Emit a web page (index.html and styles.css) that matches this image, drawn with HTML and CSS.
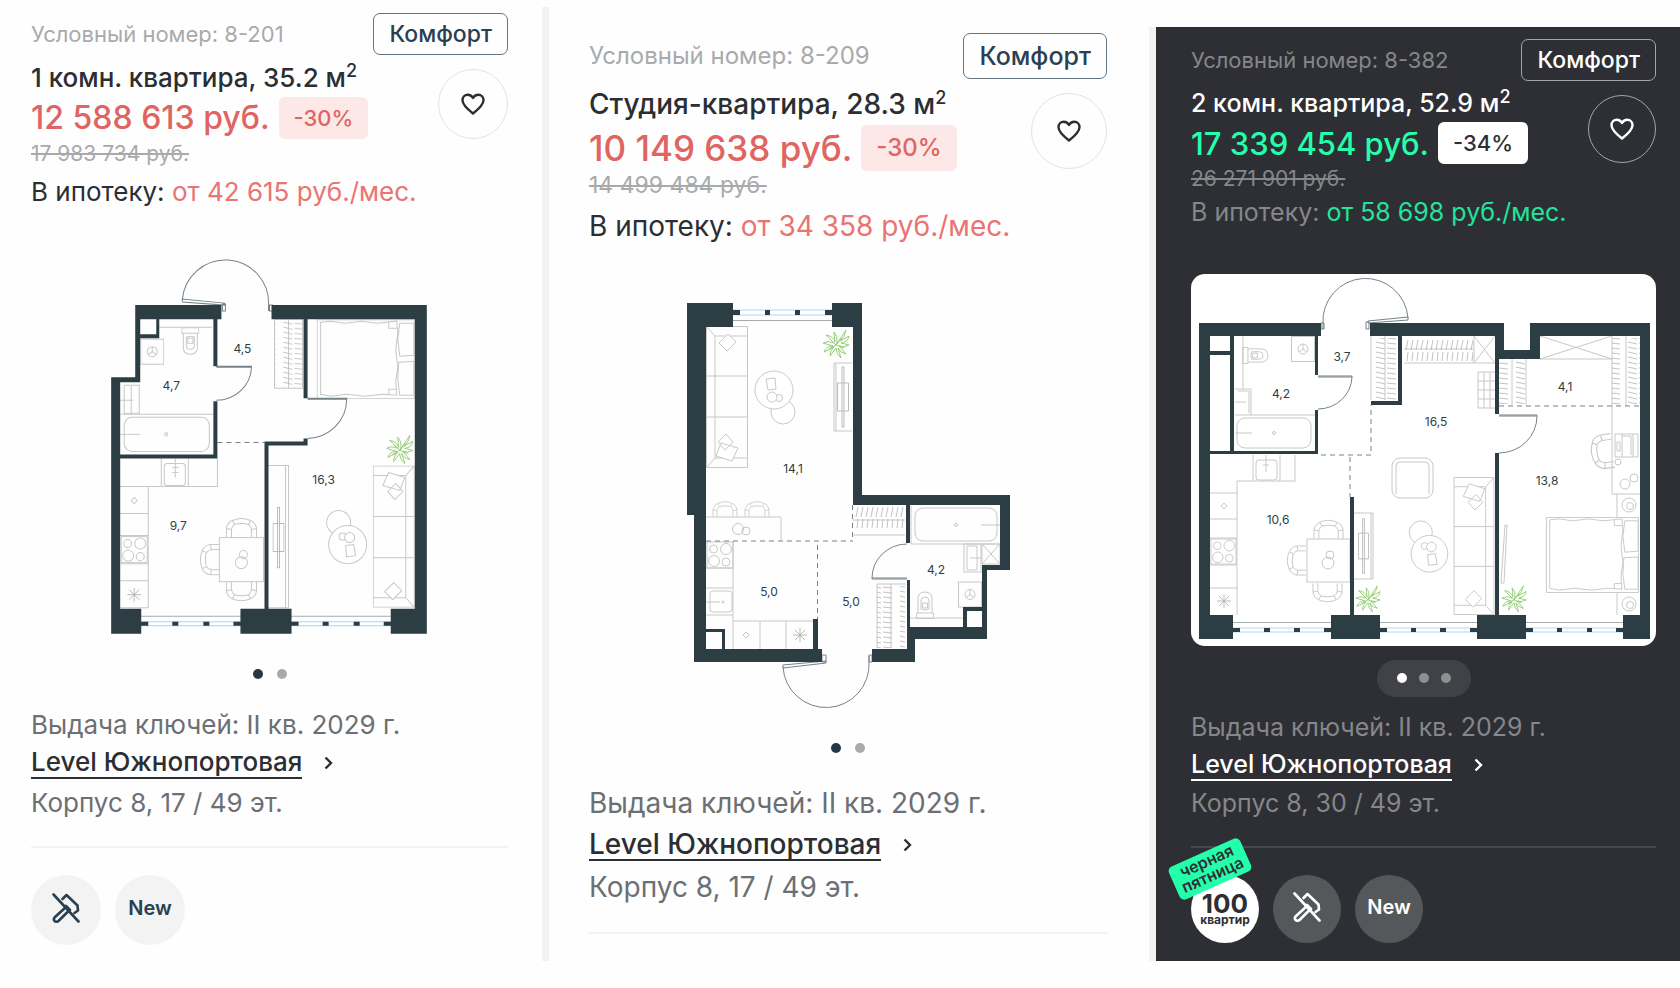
FILE: index.html
```html
<!DOCTYPE html>
<html lang="ru">
<head>
  <meta charset="UTF-8" />
  <meta name="viewport" content="width=device-width, initial-scale=1.0" />
  <title>Квартиры — Level Южнопортовая</title>
  <link rel="stylesheet" href="styles.css">
</head>
<body>
  <!-- shared icons and furniture -->
  <svg class="sprite" aria-hidden="true">
    <defs>
      <pattern id="hangV" width="28" height="5" patternUnits="userSpaceOnUse">
        <path d="M4 1l9 2M15 2l9 1" stroke="#b4b4b4" stroke-width="0.8" />
      </pattern>
      <pattern id="hangH" width="5" height="28" patternUnits="userSpaceOnUse">
        <path d="M3 3l-2 10M3 15l-1 9" stroke="#b4b4b4" stroke-width="0.8" />
      </pattern>
      <symbol id="heart" viewBox="0 0 24 22">
        <path d="M12 20.5C7 16.5 1.5 12 1.5 7.200C1.500 4 3.800 1.700 6.700 1.700C9 1.700 11 3 12 5C13 3 15 1.700 17.300 1.700C20.200 1.700 22.500 4 22.500 7.200C22.500 12 17 16.500 12 20.500Z" fill="none" stroke="currentColor" stroke-width="2.400" stroke-linejoin="round" />
      </symbol>
      <symbol id="hammer" viewBox="0 0 28 30">
        <path d="M1.500 1.500L26.500 28.500M10.500 6L14.500 2L25.500 12.500L26 17.500L22.500 20M14 13L18 17M14 14L2.500 24.500Q1 27 3 28.300Q5 29.500 7 27.500L16.500 18" fill="none" stroke="currentColor" stroke-width="2.600" stroke-linecap="round" stroke-linejoin="round" />
      </symbol>
      <symbol id="chevron" viewBox="0 0 9 14">
        <path d="M1.500 1.500L7 7L1.500 12.500" fill="none" stroke="currentColor" stroke-width="2.400" />
      </symbol>
      <symbol id="plant" viewBox="0 0 28 30">
        <path d="M14 16L24 1Q23 8 18 12L27 7Q26 13 19 14L27 16Q22 19 17 17L24 25Q18 24 16 19L19 29Q14 25 14 19L8 27Q8 21 12 18L2 23Q4 17 11 17L1 14Q6 11 12 14L4 6Q11 7 13 13L12 3Q16 7 15 13ZM14 16L20 9M14 16L22 19M14 16L7 20M14 16L8 10" fill="none" stroke="#8cc96b" stroke-width="0.9" />
      </symbol>
      <symbol id="chair" viewBox="0 0 32 20">
        <path d="M1 20V10Q3 4 7 3Q16 -1 25 3Q29 4 31 10V20M6 20V12Q7 8 9 7Q16 5 23 7Q25 8 26 12V20M7 3L9 7M25 3L23 7M1 11L6 12M31 11L26 12" fill="none" stroke="#c8c8c8" />
      </symbol>
      <symbol id="stove" viewBox="0 0 28 28">
        <g fill="none" stroke="#c8c8c8">
          <rect x="1" y="1" width="26" height="26" /><circle cx="7.500" cy="8" r="4" /><circle cx="20" cy="8" r="5.500" /><circle cx="8" cy="20" r="5.500" /><circle cx="20" cy="21" r="4" />
        </g>
      </symbol>
      <symbol id="sofa" viewBox="0 0 42 142">
        <g fill="none" stroke="#c8c8c8">
          <path d="M0.500 0.500H41.500V141.500H0.500ZM33 10V132M0.500 10H33L41.500 0.500M0.500 51H41.500M0.500 92H41.500M0.500 132H33L41.500 141.500" />
          <path d="M16 7L32 12L27 25L10 20ZM15 26L23 18L30 26L22 34ZM12 126L21 117L29 125L20 134Z" fill="#fff" />
        </g>
      </symbol>
      <symbol id="tables" viewBox="0 0 42 56">
        <g fill="#fff" stroke="#c8c8c8">
          <circle cx="13" cy="13" r="12" /><circle cx="22" cy="35" r="19" /><circle cx="17" cy="27" r="3.500" /><circle cx="24" cy="28" r="5" /><path d="M20 36l8-1 2 11-9 1z" />
        </g>
      </symbol>
      <symbol id="toilet" viewBox="0 0 18 28">
        <path d="M0.500 0.500H17.500V6H0.500ZM2 6V20Q2 27 9 27Q16 27 16 20V6M5 10Q9 8 13 10V18Q13 22 9 22Q5 22 5 18ZM6.500 11H11.500V16H6.500Z" fill="none" stroke="#c8c8c8" />
      </symbol>
      <symbol id="washer" viewBox="0 0 24 26">
        <g fill="none" stroke="#c8c8c8"><rect x="0.500" y="0.500" width="23" height="25" /><circle cx="12" cy="13" r="5" /><path d="M12 8V13L8 16M12 13L16 16" /></g>
      </symbol>
      <symbol id="star" viewBox="0 0 14 14">
        <path d="M7 0V14M0 7H14M2 2L12 12M12 2L2 12" stroke="#aaa" stroke-width="0.8" />
      </symbol>
      <symbol id="tv" viewBox="0 0 12 62">
        <path d="M5 1H7V61H5ZM0.500 17H11.500V45H0.500Z" fill="none" stroke="#bbb" />
      </symbol>
      <symbol id="bed" viewBox="0 0 98 80">
        <path d="M0.500 0.500H97.500V79.500H0.500ZM4 3L14 2L28 4L45 2L60 4L80 2L81 14L79 30L81 48L79 62L80 76L66 75L48 77L30 75L14 77L4 75ZM72 3V9H80M72 76V70H80M83 4H97V36L83 37L81 20ZM82 43L97 42V76L83 76L81 60Z" fill="none" stroke="#c8c8c8" />
      </symbol>
    </defs>
  </svg>

  <main class="listing">
    <article class="card card-one">
      <div class="card-top">
        <div class="summary">
          <p class="number">Условный номер: 8-201</p>
          <h2>1 комн. квартира, 35.2 м<sup>2</sup></h2>
          <div class="price-row"><strong class="price">12 588 613 руб.</strong><span class="discount">-30%</span></div>
          <p class="old-price"><s>17 983 734 руб.</s></p>
        </div>
        <div class="side">
          <span class="tag">Комфорт</span>
          <button type="button" class="like" aria-label="В избранное"><svg><use href="#heart" /></svg></button>
        </div>
      </div>
      <p class="mortgage">В ипотеку: <span>от 42 615 руб./мес.</span></p>

      <svg class="plan" viewBox="32 250 476 394" role="img" aria-label="Планировка 1 комн. квартиры">
        <g class="thin">
          <path d="M160 326H213M121 413H214M289 318V387M275 318H303V387H275Z" />
          <rect x="125" y="384" width="15" height="28" /><path d="M132 384V412M121 399H134" />
          <rect x="125" y="416" width="85" height="34" rx="8" /><path d="M121 433H141" /><circle cx="167" cy="433" r="1.500" />
          <path d="M121 485H218V457M162 457V485M189 457V485M149 485V606H121M121 512H149M121 534H149M121 562H149M121 579H149" />
          <rect x="165" y="462" width="21" height="22" rx="3" /><path d="M176 457V476M173 466H179M173 471H179M132 499L135 496L138 499L135 502Z" />
          <rect x="220" y="536" width="44" height="44" /><circle cx="242" cy="561" r="6" /><circle cx="244" cy="553" r="4" />
          <path d="M268 464H289V606H268M286 464V606" />
        </g>
        <rect x="275" y="320" width="28" height="66" fill="url(#hangV)" />
        <use href="#toilet" x="182" y="326" width="18" height="28" />
        <use href="#washer" x="141" y="337" width="24" height="27" />
        <use href="#bed" x="317" y="318" width="98" height="80" />
        <use href="#plant" x="386" y="433" width="28" height="30" />
        <use href="#stove" x="121" y="534" width="28" height="28" />
        <use href="#star" x="128" y="586" width="14" height="14" />
        <use href="#chair" x="226" y="516" width="32" height="20" />
        <use href="#chair" x="226" y="516" width="32" height="20" transform="rotate(180 242 558)" />
        <use href="#chair" x="226" y="516" width="32" height="20" transform="rotate(-90 242 558)" />
        <use href="#sofa" x="373" y="464" width="42" height="142" />
        <use href="#tv" x="273" y="505" width="12" height="62" />
        <use href="#tables" x="326" y="508" width="42" height="56" />
        <g class="door">
          <path d="M183 299A43 43 0 0 1 269 305V310M183 298V301L225 304V302ZM223 303H226V310H223ZM270 304H273V310H270Z" />
          <path d="M217 365H252V366H217M252 366A35 34 0 0 1 217 399M308 397H347V398H308M347 398A40 39 0 0 1 308 437" />
          <path class="dash" d="M218 441H265" />
        </g>
        <path class="glass" d="M142 620H241V624H142ZM292 620H391V624H292Z" />
        <path class="sill" d="M141 614.500H242M291 614.500H392" />
        <path class="wall" d="M136 304H222V318H141V381H121V607H142V632H112V376H136ZM272 304H427V632H391V607H415V318H272ZM241 607H292V632H241ZM157 318H160V337H141V333H157ZM214 318H218V365H214ZM214 400H218V457H121V453H214ZM304 318H308V397H304ZM304 437H308V444H269V607H265V440H304ZM141 620H149V624H141ZM173 620H179V624H173ZM204 620H210V624H204ZM234 620H242V624H234ZM291 620H299V624H291ZM323 620H329V624H323ZM354 620H360V624H354ZM384 620H392V624H384Z" />
        <g class="area">
          <text x="243" y="352">4,5</text><text x="172" y="389">4,7</text><text x="179" y="528">9,7</text><text x="324" y="483">16,3</text>
        </g>
      </svg>

      <div class="dots">
        <button type="button" class="active" aria-label="Слайд 1"></button>
        <button type="button" aria-label="Слайд 2"></button>
      </div>

      <div class="details">
        <p>Выдача ключей: II кв. 2029 г.</p>
        <p><a href="#project"><span>Level Южнопортовая</span><svg><use href="#chevron" /></svg></a></p>
        <p>Корпус 8, 17 / 49 эт.</p>
      </div>
      <div class="features">
        <span class="feature"><svg><use href="#hammer" /></svg></span>
        <span class="feature">New</span>
      </div>
    </article>

    <article class="card card-two">
      <div class="card-top">
        <div class="summary">
          <p class="number">Условный номер: 8-209</p>
          <h2>Студия-квартира, 28.3 м<sup>2</sup></h2>
          <div class="price-row"><strong class="price">10 149 638 руб.</strong><span class="discount">-30%</span></div>
          <p class="old-price"><s>14 499 484 руб.</s></p>
        </div>
        <div class="side">
          <span class="tag">Комфорт</span>
          <button type="button" class="like" aria-label="В избранное"><svg><use href="#heart" /></svg></button>
        </div>
      </div>
      <p class="mortgage">В ипотеку: <span>от 34 358 руб./мес.</span></p>

      <svg class="plan" viewBox="589 290 518 424" role="img" aria-label="Планировка студии">
        <g class="thin">
          <path d="M834 363H852M834 363V431H852M836 363V431" />
          <path d="M706 517H781V540" /><circle cx="738" cy="529" r="5.500" /><circle cx="746" cy="531" r="4" />
          <path d="M733 541V649M706 568H733M706 588H733M706 615H733M733 621H813M760 621V649M786 621V649M743 635L746 632L749 635L746 638Z" />
          <rect x="710" y="591" width="22" height="21" rx="3" /><path d="M706 602H720" /><circle cx="723" cy="602" r="1" />
          <path d="M853 535H905M853 520H905M877 648V584H906M891 584V648" />
          <rect x="915" y="508" width="82" height="33" rx="8" /><path d="M911 506V544H1000M981 525H1000" /><circle cx="956" cy="525" r="1.500" />
          <rect x="964" y="544" width="17" height="28" /><path d="M967 546H977V570H967ZM970 558H981M982 544H1000V564H982ZM982 544L1000 564M1000 544L982 564M909 618H963" />
        </g>
        <rect x="853" y="506" width="52" height="28" fill="url(#hangH)" />
        <rect x="877" y="586" width="28" height="62" fill="url(#hangV)" />
        <use href="#sofa" x="706" y="326" width="42" height="142" transform="rotate(180 727 397)" />
        <use href="#tables" x="754" y="369" width="42" height="56" transform="rotate(180 775 397)" />
        <use href="#tv" x="837" y="366" width="12" height="62" />
        <use href="#plant" x="822" y="329" width="28" height="30" />
        <use href="#chair" x="712" y="501" width="26" height="16" />
        <use href="#chair" x="744" y="501" width="26" height="16" />
        <use href="#stove" x="706" y="541" width="28" height="28" />
        <use href="#star" x="793" y="628" width="14" height="14" />
        <use href="#washer" x="958" y="581" width="24" height="27" />
        <use href="#toilet" x="916" y="591" width="18" height="28" transform="rotate(180 925 605)" />
        <g class="door">
          <path d="M783 667A43 43 0 0 0 869 662V656M783 668V665L826 661V663ZM822 655H826V662H822ZM869 655H872V662H869Z" />
          <path d="M907 578H872V579H907M872 578A35 34 0 0 1 907 544" />
          <path class="dash" d="M706 541H853M817.500 545V619M852.500 505V537" />
        </g>
        <path class="glass" d="M733 310H832V315H733Z" />
        <path class="sill" d="M733 320.500H832" />
        <path class="wall" d="M687 303H733V327H706V649H822V662H694V515H687ZM832 303H862V495H1010V570H987V639H915V662H872V649H907V580H910V627H982V565H1000V505H910V543H906V505H853V327H832ZM706 629H725V649H722V632H706ZM963 607H982V611H967V627H963ZM813 619H818V649H813ZM733 310H740V315H733ZM765 310H770V315H765ZM795 310H800V315H795ZM825 310H832V315H825Z" />
        <g class="area">
          <text x="793" y="473">14,1</text><text x="769" y="596">5,0</text><text x="851" y="606">5,0</text><text x="936" y="574">4,2</text>
        </g>
      </svg>

      <div class="dots">
        <button type="button" class="active" aria-label="Слайд 1"></button>
        <button type="button" aria-label="Слайд 2"></button>
      </div>

      <div class="details">
        <p>Выдача ключей: II кв. 2029 г.</p>
        <p><a href="#project"><span>Level Южнопортовая</span><svg><use href="#chevron" /></svg></a></p>
        <p>Корпус 8, 17 / 49 эт.</p>
      </div>
    </article>

    <article class="card card-three dark">
      <div class="card-top">
        <div class="summary">
          <p class="number">Условный номер: 8-382</p>
          <h2>2 комн. квартира, 52.9 м<sup>2</sup></h2>
          <div class="price-row"><strong class="price">17 339 454 руб.</strong><span class="discount">-34%</span></div>
          <p class="old-price"><s>26 271 901 руб.</s></p>
        </div>
        <div class="side">
          <span class="tag">Комфорт</span>
          <button type="button" class="like" aria-label="В избранное"><svg><use href="#heart" /></svg></button>
        </div>
      </div>
      <p class="mortgage">В ипотеку: <span>от 58 698 руб./мес.</span></p>

      <svg class="plan" viewBox="1191 273 465 372" role="img" aria-label="Планировка 2 комн. квартиры">
        <g class="thin">
          <path d="M1243 335V388M1235 414H1315M1235 388H1251V414M1238 390H1249V412M1235 401H1246" />
          <rect x="1237" y="417" width="74" height="30" rx="8" /><path d="M1235 432H1252" /><circle cx="1274" cy="432" r="1.500" />
          <path d="M1371 335V399M1385 335V399M1404 362H1474M1404 348H1474M1474 335V362H1495M1474 335L1495 362M1495 335L1474 362" />
          <path d="M1478 371H1495M1478 380H1495M1478 389H1495M1478 398H1495M1478 407H1495M1478 371V407M1484 371V407M1490 371V407" />
          <path d="M1540 358H1612M1540 335L1612 358M1612 335L1540 358M1612 335V493H1640M1626 335V405M1526 358V404M1512 358V404" />
          <path d="M1253 454V480M1280 454V480M1295 454V480H1237V614M1210 492H1237M1210 518H1237M1210 537H1237M1210 564H1237M1210 587H1237M1221 505L1224 502L1227 505L1224 508Z" />
          <rect x="1256" y="459" width="21" height="20" rx="3" /><path d="M1266 454V471M1263 464H1269" />
          <rect x="1307" y="538" width="43" height="43" /><circle cx="1328" cy="562" r="6" /><circle cx="1330" cy="554" r="4" />
          <path d="M1354 512H1373V578H1354M1371 512V578" />
          <rect x="1392" y="457" width="41" height="40" rx="8" /><path d="M1396 493V465Q1396 461 1400 461H1425Q1429 461 1429 465V493" />
          <path d="M1615 433H1638V456H1615ZM1622 433V456M1633 433V456M1622 435H1631V454M1617 441H1620V450H1617Z" /><circle cx="1625" cy="483" r="5" /><circle cx="1634" cy="477" r="4" /><circle cx="1618" cy="461" r="3" />
          <path d="M1617 493V516M1617 592V614" /><circle cx="1629" cy="504" r="7" /><circle cx="1630" cy="505" r="3.500" /><circle cx="1629" cy="603" r="7" /><circle cx="1630" cy="604" r="3.500" />
          <path d="M1505 524H1507L1504 582H1501Z" />
        </g>
        <rect x="1371" y="337" width="28" height="62" fill="url(#hangV)" />
        <rect x="1405" y="335" width="68" height="27" fill="url(#hangH)" />
        <rect x="1612" y="337" width="28" height="68" fill="url(#hangV)" />
        <rect x="1499" y="359" width="28" height="44" fill="url(#hangV)" />
        <use href="#toilet" x="1248" y="341" width="17" height="27" transform="rotate(-90 1256 355)" />
        <use href="#washer" x="1291" y="335" width="24" height="26" />
        <use href="#stove" x="1210" y="537" width="27" height="27" />
        <use href="#star" x="1217" y="593" width="14" height="14" />
        <use href="#chair" x="1313" y="518" width="31" height="20" />
        <use href="#chair" x="1313" y="518" width="31" height="20" transform="rotate(180 1328 560)" />
        <use href="#chair" x="1313" y="518" width="31" height="20" transform="rotate(-90 1328 560)" />
        <use href="#chair" x="1583" y="438" width="36" height="27" transform="rotate(-98 1601 451)" />
        <use href="#tv" x="1358" y="515" width="11" height="60" />
        <use href="#sofa" x="1453" y="476" width="42" height="138" />
        <use href="#tables" x="1408" y="519" width="41" height="54" />
        <use href="#bed" x="1545" y="516" width="95" height="76" />
        <use href="#plant" x="1354" y="584" width="28" height="28" />
        <use href="#plant" x="1500" y="584" width="28" height="28" />
        <g class="door">
          <path d="M1408 317A42 42 0 0 0 1323 323V328M1408 316V319L1368 322V320ZM1321 322H1324V328H1321ZM1366 321H1369V328H1366Z" />
          <path d="M1318 375H1352V376H1318M1352 376A34 33 0 0 1 1318 408M1499 414H1537V415H1499M1537 415A38 37 0 0 1 1499 452" />
          <path class="dash" d="M1321 454H1371V404M1350 456V496M1499 405H1640" />
        </g>
        <path class="glass" d="M1233 627H1331V631H1233ZM1379 627H1477V631H1379ZM1526 627H1624V631H1526Z" />
        <path class="sill" d="M1233 621.500H1331M1379 621.500H1477M1526 621.500H1624" />
        <path class="wall" d="M1199 322H1321V335H1318V374H1315V335H1234V450H1315V409H1318V453H1210V614H1233V638H1199ZM1370 322H1504V349H1530V322H1650V638H1623V614H1640V335H1540V358H1499V413H1495V335H1402V404H1371V400H1398V335H1370ZM1331 614H1350V496H1354V614H1380V638H1331ZM1477 614H1495V452H1499V614H1526V638H1477ZM1233 627H1240V631H1233ZM1264 627H1270V631H1264ZM1294 627H1300V631H1294ZM1324 627H1331V631H1324ZM1379 627H1387V631H1379ZM1411 627H1416V631H1411ZM1440 627H1446V631H1440ZM1470 627H1477V631H1470ZM1526 627H1533V631H1526ZM1557 627H1562V631H1557ZM1587 627H1592V631H1587ZM1616 627H1624V631H1616Z" />
        <path fill="#fff" d="M1210 335H1230V350H1210ZM1210 354H1230V450H1210Z" />
        <g class="area">
          <text x="1342" y="360">3,7</text><text x="1281" y="397">4,2</text><text x="1436" y="425">16,5</text><text x="1565" y="390">4,1</text><text x="1278" y="523">10,6</text><text x="1547" y="484">13,8</text>
        </g>
      </svg>

      <div class="dots">
        <button type="button" class="active" aria-label="Слайд 1"></button>
        <button type="button" aria-label="Слайд 2"></button>
        <button type="button" aria-label="Слайд 3"></button>
      </div>

      <div class="details">
        <p>Выдача ключей: II кв. 2029 г.</p>
        <p><a href="#project"><span>Level Южнопортовая</span><svg><use href="#chevron" /></svg></a></p>
        <p>Корпус 8, 30 / 49 эт.</p>
      </div>
      <div class="features">
        <span class="feature promo"><b>100</b><small>квартир</small><em>черная<br>пятница</em></span>
        <span class="feature"><svg><use href="#hammer" /></svg></span>
        <span class="feature">New</span>
      </div>
    </article>
  </main>
</body>
</html>
```

FILE: styles.css
```css
:root {
  --ink: #2b2e33;
  --navy: #2a4050;
  --muted: #a9aaac;
  --body: #6c6f73;
  --red: #e06462;
  --line: #f2f2f2;
  --wall: #2c3e44;
}

* {
  box-sizing: border-box;
}

body {
  margin: 0;
  background: #fefefe;
  color: var(--ink);
  font-family: Inter, "Noto Sans", sans-serif;
}

p, h2 {
  margin: 0;
  white-space: nowrap;
}

button {
  padding: 0;
  border: none;
  background: none;
  cursor: pointer;
}

.sprite {
  position: absolute;
  width: 0;
  height: 0;
}

.listing {
  display: grid;
  grid-template-columns: 542fr 607fr 531fr;
  align-items: stretch;
  padding-top: 7px;
}

.card {
  --small: 22px;
  --old: 21px;
  --text: 26px;
  --price: 32px;
  --tag: 23px;
  --control: 42px;
  --row: 32px;
  --circle: 70px;
  --step: 39px;
  display: flex;
  flex-direction: column;
  min-width: 0;
}

.card-one {
  padding: 6px 34px 0 31px;
}

.card-two {
  --small: 24px;
  --old: 23px;
  --text: 28px;
  --price: 35px;
  --tag: 25px;
  --control: 46px;
  --row: 36px;
  --circle: 76px;
  --step: 42px;
  padding: 26px 42px 18px 40px;
  border-left: 7px solid var(--line);
}

.card-three {
  --text: 25px;
  --price: 31px;
  --row: 31px;
  --circle: 68px;
  --step: 38px;
  margin-top: 20px;
  padding: 12px 24px 18px 35px;
  border-left: 7px solid var(--line);
}

.card-top {
  display: flex;
  justify-content: space-between;
}

.summary {
  min-width: 0;
}

.number {
  line-height: var(--control);
  font-size: var(--small);
  color: var(--muted);
}

h2 {
  margin-top: 7px;
  font-size: var(--text);
  font-weight: 500;
  line-height: var(--row);
}

h2 sup {
  font-size: 18px;
  line-height: 0;
}

.price-row {
  display: flex;
  align-items: center;
  gap: 9px;
  margin-top: 3px;
  white-space: nowrap;
}

.price {
  font-size: var(--price);
  font-weight: 500;
  line-height: 1;
  color: var(--red);
}

.discount {
  padding: 0 15px;
  border-radius: 6px;
  background: #fbe8e7;
  color: var(--red);
  font-size: var(--small);
  font-weight: 500;
  line-height: var(--control);
}

.old-price {
  font-size: var(--old);
  line-height: 29px;
  color: var(--muted);
}

.mortgage {
  margin-top: 8px;
  font-size: var(--text);
  line-height: var(--row);
}

.dark .mortgage {
  margin-top: 4px;
}

.mortgage span {
  color: #e97472;
}

.side {
  display: flex;
  flex-direction: column;
  flex-shrink: 0;
  align-items: flex-end;
  gap: 14px;
}

.tag {
  padding: 0 15px;
  border: 1px solid #627381;
  border-radius: 7px;
  color: var(--navy);
  font-size: var(--tag);
  font-weight: 500;
  line-height: calc(var(--control) - 2px);
}

.like {
  display: grid;
  place-items: center;
  width: var(--circle);
  height: var(--circle);
  border: 1px solid #e2e2e2;
  border-radius: 50%;
  color: var(--ink);
}

.like svg {
  width: 24px;
  height: 22px;
}

.plan {
  display: block;
  width: 100%;
  margin-top: 43px;
}

.card-two .plan,
.card-three .plan {
  margin-top: 46px;
}

.thin {
  fill: none;
  stroke: #c8c8c8;
}

.door {
  fill: none;
  stroke: #74838a;
}

.dash {
  stroke-dasharray: 5 4;
}

.glass {
  fill: #fff;
  stroke: #a9d8f7;
}

.sill {
  stroke: #a5abae;
}

.wall {
  fill: var(--wall);
}

.area {
  fill: var(--wall);
  font-size: 12px;
  text-anchor: middle;
}

.dots {
  display: flex;
  align-self: center;
  gap: 14px;
  margin: 23px 0 26px;
}

.card-two .dots {
  margin: 29px 0 29px;
}

.dots button {
  width: 10px;
  height: 10px;
  border-radius: 50%;
  background: #aaa;
}

.dots .active {
  background: #24384a;
}

.details {
  padding-bottom: 24px;
  border-bottom: 2px solid var(--line);
  color: var(--body);
  font-size: var(--text);
  line-height: var(--step);
}

.details a {
  display: flex;
  align-items: center;
  gap: 22px;
  height: var(--step);
  color: var(--ink);
  font-weight: 500;
  line-height: 30px;
  text-decoration: none;
}

.details a span {
  border-bottom: 2px solid currentColor;
}

.details a svg {
  width: 9px;
  height: 14px;
}

.features {
  display: flex;
  gap: 14px;
  margin-top: 27px;
}

.feature {
  display: grid;
  place-items: center;
  width: var(--circle);
  height: var(--circle);
  padding-bottom: 4px;
  border-radius: 50%;
  background: #f3f3f3;
  color: var(--navy);
  font-size: 20px;
  font-weight: 600;
}

.feature svg {
  width: 28px;
  height: 30px;
}

/* dark card */
.dark {
  --ink: #fff;
  --muted: #85878a;
  --body: #85878a;
  --navy: #fff;
  --red: #24ffab;
  background: #2d2f34;
  color: var(--ink);
}

.dark .discount {
  background: #fff;
  color: #2d2f34;
}

.dark .mortgage {
  color: var(--body);
}

.dark .mortgage span {
  color: #24e49b;
}

.dark .tag,
.dark .like {
  border-color: #a4a5a7;
}

.dark .plan {
  border-radius: 14px;
  background: #fff;
}

.dark .dots {
  gap: 12px;
  margin: 14px 0 11px;
  padding: 13px 20px 14px;
  border-radius: 19px;
  background: #414247;
}

.dark .dots button {
  background: #8f9092;
}

.dark .dots .active {
  background: #fff;
}

.dark .details {
  border-color: #46494d;
}

.dark .feature {
  background: #55585b;
}

.dark .promo {
  position: relative;
  align-content: center;
  padding: 2px 0 0;
  background: #fff;
  color: #2d2f34;
}

.promo b {
  font-size: 26px;
  font-weight: 700;
  line-height: 20px;
}

.promo small {
  font-size: 12px;
  font-weight: 700;
  line-height: 12px;
}

/* sticker over the promo circle */
.promo em {
  position: absolute;
  top: -24px;
  left: -20px;
  width: 78px;
  padding: 2px 0 4px;
  border-radius: 5px;
  background: #24ffab;
  font-size: 16px;
  font-style: normal;
  font-weight: 600;
  line-height: 15px;
  text-align: center;
  transform: rotate(-24deg);
}
```
